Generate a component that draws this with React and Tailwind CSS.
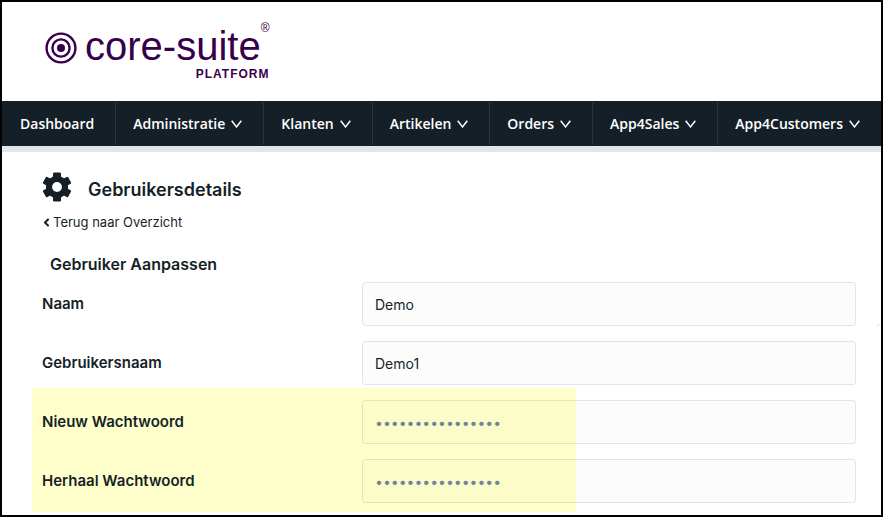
import React, { useState } from 'react';
import { FaAngleLeft } from 'react-icons/fa';

const menu = [
  { label: 'Dashboard' },
  { label: 'Administratie', sub: true },
  { label: 'Klanten', sub: true },
  { label: 'Artikelen', sub: true },
  { label: 'Orders', sub: true },
  { label: 'App4Sales', sub: true },
  { label: 'App4Customers', sub: true },
];

function Logo() {
  return (
    <a href="#" className="flex w-max items-start text-[#37004d] font-['Liberation_Sans',sans-serif]">
      <svg viewBox="0 0 32 32" className="mt-3 size-8" fill="none" stroke="currentColor">
        <circle cx="16" cy="16" r="14.4" strokeWidth="2.4" />
        <circle cx="16" cy="16" r="8.6" strokeWidth="2.4" />
        <circle cx="16" cy="16" r="4" fill="currentColor" stroke="none" />
      </svg>
      <span className="ml-2 flex flex-col items-end">
        <span className="flex items-start">
          <span className="mt-1 text-[40px] leading-[44px]">core-suite</span>
          <span className="text-xs leading-4">®</span>
        </span>
        <span className="text-xs leading-3 font-bold tracking-[1px]">PLATFORM</span>
      </span>
    </a>
  );
}

function GearIcon({ className }) {
  return (
    <svg viewBox="0 0 30 30" className={className} fill="currentColor">
      <circle cx="15" cy="15" r="11" />
      <rect x="11" y="0.5" width="8" height="29" rx="1.2" />
      <rect x="11" y="0.5" width="8" height="29" rx="1.2" transform="rotate(60 15 15)" />
      <rect x="11" y="0.5" width="8" height="29" rx="1.2" transform="rotate(120 15 15)" />
      <circle cx="15" cy="15" r="4.9" fill="#fff" />
    </svg>
  );
}

function NavItem({ label, sub }) {
  return (
    <li className="flex border-r border-[#2b353d] last:border-r-0 first:pl-px">
      <a href="#" className="flex items-center gap-1.5 pl-[17px] pr-[21px] text-sm font-semibold text-white">
        {label}
        {sub && (
          <svg viewBox="0 0 11 8" className="h-2 w-[11px]" fill="none" stroke="currentColor" strokeWidth="1.5">
            <path d="M0.7 0.7 5.5 6.9 10.3 0.7" />
          </svg>
        )}
      </a>
    </li>
  );
}

function Field({ id, label, type = 'text', value, onChange }) {
  return (
    <div className="grid grid-cols-[320px_1fr] items-center">
      <label htmlFor={id} className="text-[15px] font-semibold">{label}</label>
      <input
        id={id}
        name={id}
        type={type}
        value={value}
        onChange={onChange}
        autoComplete="off"
        className={
          'h-11 w-full rounded border border-[#1c1c50]/12 bg-black/1 bg-clip-padding px-3 text-sm outline-none ' +
          (type === 'password' ? 'text-[#76829a]' : 'text-[#151f28]')
        }
      />
    </div>
  );
}

export default function App() {
  const [form, setForm] = useState({
    naam: 'Demo',
    gebruikersnaam: 'Demo1',
    nieuw: '1234567890123456',
    herhaal: '1234567890123456',
  });
  const update = (e) => setForm({ ...form, [e.target.name]: e.target.value });

  return (
    <div className="relative overflow-hidden border-2 border-black bg-white text-[#151f28] font-['Inter',sans-serif]">
      <header>
        <div className="h-[99px] pl-[43px] pt-[18px]">
          <Logo />
        </div>
        <nav className="border-b-6 border-[#e4e4eb] bg-[#151f28] font-['Open_Sans',sans-serif]">
          <ul className="flex h-[45px] py-px">
            {menu.map((item) => (
              <NavItem key={item.label} {...item} />
            ))}
          </ul>
        </nav>
      </header>

      <main className="pl-10 pr-[25px] pt-5 pb-3">
        <div className="flex items-start gap-4">
          <GearIcon className="size-[30px]" />
          <h1 className="pt-1 text-lg leading-7 font-semibold">Gebruikersdetails</h1>
        </div>
        <a href="#" className="mt-2 flex w-max items-center text-[13px] leading-5">
          <FaAngleLeft className="-ml-0.5 size-[13px]" />
          Terug naar Overzicht
        </a>

        <form onSubmit={(e) => e.preventDefault()}>
          <h2 className="mt-5 mb-1.5 pl-2 text-base leading-6 font-semibold">Gebruiker Aanpassen</h2>
          <div className="flex flex-col gap-[15px]">
            <Field id="naam" label="Naam" value={form.naam} onChange={update} />
            <Field id="gebruikersnaam" label="Gebruikersnaam" value={form.gebruikersnaam} onChange={update} />
            <div className="relative isolate flex flex-col gap-[15px]">
              {/* marker behind the password fields */}
              <div className="absolute -top-3 -bottom-[9px] -left-2.5 -z-10 w-[544px] bg-[#ffffcc]" />
              <Field id="nieuw" type="password" label="Nieuw Wachtwoord" value={form.nieuw} onChange={update} />
              <Field id="herhaal" type="password" label="Herhaal Wachtwoord" value={form.herhaal} onChange={update} />
            </div>
          </div>
        </form>
      </main>

      {/* corner of the panel that starts off-screen */}
      <div className="absolute top-[322px] -right-[3px] size-2 rounded-tl border-t border-l border-[#e4e4eb] [clip-path:inset(0_0_5px_0)]" />
    </div>
  );
}
